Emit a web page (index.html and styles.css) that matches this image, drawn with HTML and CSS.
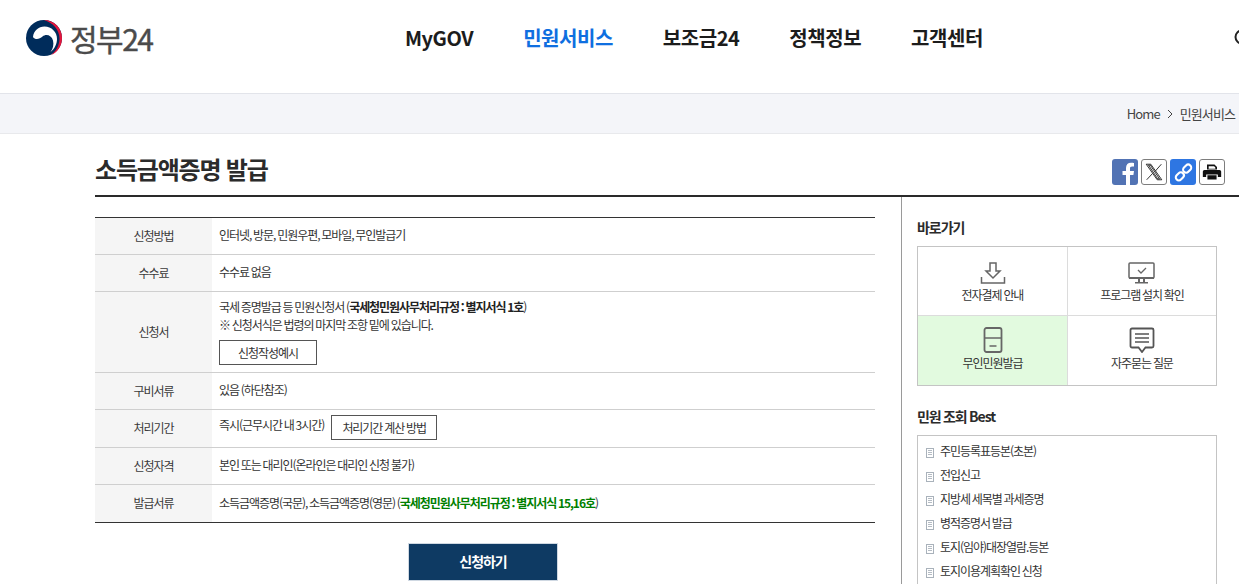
FILE: index.html
```html
<!DOCTYPE html>
<html lang="ko">
<head>
  <meta charset="UTF-8">
  <title>소득금액증명 발급 | 정부24</title>
  <link rel="stylesheet" href="styles.css">
</head>
<body>

<header class="top-header">
  <a class="logo">
    <svg class="logo-mark" viewBox="0 0 36 36" width="36" height="36">
      <circle cx="18" cy="18" r="18" fill="#002c5b"/>
      <path d="M18 0C28 0 36 8 36 18c0 8-4.500 14.500-11 17 5-3.500 8.500-10 8.500-16.500C33.500 9.500 26.500 2.500 18 0z" fill="#e3153c"/>
      <path d="M7 17C7.500 11 12.500 6.500 18.500 6.500 25.500 6.500 31 12 31 19c0 5-2.500 10-6.500 13 2.500-3 3.500-7.500 2.500-11.500C25.500 15 20 13.500 16.500 16.500 13.500 19.500 9 20 7 17z" fill="#fff"/>
    </svg>
    <span class="logo-text">정부24</span>
  </a>
  <nav class="main-nav">
    <a>MyGOV</a>
    <a class="active">민원서비스</a>
    <a>보조금24</a>
    <a>정책정보</a>
    <a>고객센터</a>
  </nav>
  <svg class="search-icon" viewBox="0 0 20 20" width="20" height="20">
    <circle cx="9" cy="9" r="6.500" fill="none" stroke="#222" stroke-width="2"/>
    <path d="M14 14l5 5" stroke="#222" stroke-width="2"/>
  </svg>
</header>

<div class="breadcrumb">
  <a>Home</a>
  <svg viewBox="0 0 6 10" width="6" height="10"><path d="M1 1l4 4-4 4" fill="none" stroke="#444" stroke-width="1"/></svg>
  <a>민원서비스</a>
</div>

<div class="content">
  <div class="title-row">
    <h1>소득금액증명 발급</h1>
    <div class="share">
      <a class="share-btn fb">
        <svg viewBox="0 0 26 26" width="26" height="26"><path d="M18 26V16h3.400l.6-4h-4V9.500c0-1.200.5-2 2.100-2H22V3.900C21.500 3.800 20.300 3.700 19 3.700c-3 0-5 1.800-5 5.200V12h-3.500v4H14v10z" fill="#fff"/></svg>
      </a>
      <a class="share-btn plain">
        <svg viewBox="0 0 24 24" width="22" height="22"><path d="M3.500 3.500h5L20.500 20.500h-5zM20 3.500 13 11.500M10.500 13.500 4 20.500M6 4.500h2L18 19.500h-2z" fill="none" stroke="#222" stroke-width="1"/></svg>
      </a>
      <a class="share-btn link">
        <svg viewBox="0 0 26 26" width="21" height="21"><g fill="none" stroke="#fff" stroke-width="2.600"><rect x="12" y="4.500" width="11" height="7.500" rx="3.700" transform="rotate(-45 17.500 8.200)"/><rect x="3" y="14" width="11" height="7.500" rx="3.700" transform="rotate(-45 8.500 17.800)"/></g></svg>
      </a>
      <a class="share-btn plain">
        <svg viewBox="0 0 24 24" width="20" height="20"><path d="M6 3h9l3 3v3H6zM8 5v3h8V6.500L14.500 5zM3 9.500h18a2 2 0 0 1 2 2V18h-4v-3H5v3H1v-6.500a2 2 0 0 1 2-2zM6.500 16h11v5h-11z" fill="#111" fill-rule="evenodd"/></svg>
      </a>
    </div>
  </div>

  <div class="columns">
    <main class="main-col">
      <table class="info-table">
        <tr class="h37">
          <th>신청방법</th>
          <td>인터넷, 방문, 민원우편, 모바일, 무인발급기</td>
        </tr>
        <tr class="h37">
          <th>수수료</th>
          <td>수수료 없음</td>
        </tr>
        <tr>
          <th>신청서</th>
          <td class="form-cell">
            <p>국세 증명발급 등 민원신청서 (<b>국세청민원사무처리규정 : 별지서식 1호</b>)</p>
            <p>※ 신청서식은 법령의 마지막 조항 밑에 있습니다.</p>
            <a class="line-btn wide">신청작성예시</a>
          </td>
        </tr>
        <tr class="h37">
          <th>구비서류</th>
          <td>있음 (하단참조)</td>
        </tr>
        <tr class="h38">
          <th>처리기간</th>
          <td class="period-cell"><span>즉시(근무시간 내 3시간)</span><a class="line-btn">처리기간 계산 방법</a></td>
        </tr>
        <tr class="h37">
          <th>신청자격</th>
          <td>본인 또는 대리인(온라인은 대리인 신청 불가)</td>
        </tr>
        <tr class="h38">
          <th>발급서류</th>
          <td>소득금액증명(국문), 소득금액증명(영문) (<b class="green">국세청민원사무처리규정 : 별지서식 15,16호</b>)</td>
        </tr>
      </table>
      <div class="apply-wrap">
        <a class="apply-btn">신청하기</a>
      </div>
    </main>

    <aside class="side-col">
      <h2>바로가기</h2>
      <div class="quick-grid">
        <a class="quick-item">
          <svg viewBox="0 0 26 24" width="26" height="24"><path d="M10 2h6v8h4l-7 7-7-7h4zM1.500 16v6h23v-6" fill="none" stroke="#666" stroke-width="1.500"/></svg>
          <span>전자결제 안내</span>
        </a>
        <a class="quick-item">
          <svg viewBox="0 0 28 24" width="28" height="24"><rect x="1" y="2" width="25" height="15" rx="1" fill="none" stroke="#666" stroke-width="1.500"/><path d="M1 16h25v2H1z" fill="#666"/><path d="M10 9l3 3 5-5" fill="none" stroke="#666" stroke-width="1.300"/><path d="M10 18h2v3h-2zM15 18h2v3h-2zM7 21h13v1.500H7z" fill="#666"/></svg>
          <span>프로그램 설치 확인</span>
        </a>
        <a class="quick-item kiosk">
          <svg viewBox="0 0 20 26" width="20" height="26"><rect x="1.500" y="1" width="17" height="24" rx="2" fill="none" stroke="#666" stroke-width="1.800"/><path d="M2 11h16" stroke="#666" stroke-width="1.500"/><path d="M6.500 19h7" stroke="#666" stroke-width="1.500"/></svg>
          <span>무인민원발급</span>
        </a>
        <a class="quick-item">
          <svg viewBox="0 0 26 26" width="26" height="26"><path d="M3 1.500h20a1.500 1.500 0 0 1 1.500 1.500v16a1.500 1.500 0 0 1-1.500 1.500h-6.500L13 25l-3.500-4.500H3A1.500 1.500 0 0 1 1.500 19V3A1.500 1.500 0 0 1 3 1.500z" fill="none" stroke="#555" stroke-width="1.800"/><path d="M6 7h14M6 11h14M6 15h14" stroke="#555" stroke-width="1.600"/></svg>
          <span>자주묻는 질문</span>
        </a>
      </div>

      <h2 class="best-title">민원 조회 Best</h2>
      <ul class="best-list">
        <li>주민등록표등본(초본)</li>
        <li>전입신고</li>
        <li>지방세 세목별 과세증명</li>
        <li>병적증명서 발급</li>
        <li>토지(임야)대장열람.등본</li>
        <li>토지이용계획확인 신청</li>
      </ul>
    </aside>
  </div>
</div>

</body>
</html>
```

FILE: styles.css
```css
* {
  margin: 0;
  padding: 0;
  box-sizing: border-box;
}
html, body {
  height: 584px;
  overflow: hidden;
}
body {
  width: 1239px;
  background: #fff;
  color: #333;
  font-family: "Noto Sans CJK KR", "Noto Sans", sans-serif;
  font-size: 12px;
  letter-spacing: -1.05px;
  word-spacing: -0.5px;
}
a {
  color: inherit;
  text-decoration: none;
}

.top-header {
  height: 94px;
  width: 1260px;
  display: flex;
  align-items: flex-start;
  padding: 20px 0 0 26px;
  border-bottom: 1px solid #e2e4ea;
}
.logo {
  display: flex;
  align-items: center;
  gap: 8px;
  width: 379px;
  height: 36px;
}
.logo-text {
  font-size: 30px;
  color: #4b4b4b;
  letter-spacing: -0.05em;
  -webkit-text-stroke: 0.4px #4b4b4b;
}
.main-nav {
  display: flex;
  gap: 50px;
  height: 34px;
  align-items: center;
}
.main-nav a {
  font-size: 20px;
  font-weight: 700;
  color: #1c1c1c;
  letter-spacing: -0.023em;
  word-spacing: 0;
}
.main-nav a.active {
  color: #0f6fe0;
}
.search-icon {
  margin: 8px 0 0 250px;
}

.breadcrumb {
  height: 40px;
  background: #f4f5f9;
  border-bottom: 1px solid #e8e9ec;
  display: flex;
  align-items: center;
  justify-content: flex-end;
  gap: 7px;
  padding-right: 4px;
  font-size: 13px;
  letter-spacing: -0.07em;
  color: #444;
}

.content {
  padding-left: 95px;
}
.title-row {
  height: 63px;
  display: flex;
  justify-content: space-between;
  border-bottom: 2px solid #2a2a2a;
  padding-right: 14px;
}
.title-row h1 {
  font-size: 24px;
  font-weight: 700;
  color: #2b2b2b;
  line-height: 35px;
  padding-top: 17px;
  letter-spacing: -0.05em;
  word-spacing: 0;
}
.share {
  display: flex;
  gap: 3px;
  padding-top: 25px;
}
.share-btn {
  width: 26px;
  height: 26px;
  border-radius: 3px;
  display: flex;
  align-items: center;
  justify-content: center;
  overflow: hidden;
}
.share-btn.fb {
  background: #5273b4;
}
.share-btn.link {
  background: #2e76e2;
}
.share-btn.plain {
  border: 1px solid #7d7d7d;
}

.columns {
  display: flex;
}
.main-col {
  width: 780px;
  padding-top: 20px;
}
.info-table {
  width: 780px;
  border-collapse: collapse;
  border-top: 1px solid #333;
  border-bottom: 1px solid #333;
  table-layout: fixed;
}
.info-table tr {
  border-bottom: 1px solid #cfcfcf;
}
.info-table tr.h37 {
  height: 37px;
}
.info-table tr.h38 {
  height: 38px;
}
.info-table tr:last-child {
  border-bottom: 1px solid #333;
}
.info-table th {
  width: 117px;
  background: #f5f5f5;
  font-weight: 400;
  color: #3a3a3a;
  padding-bottom: 2px;
}
.info-table td {
  padding: 0 7px 2px;
  line-height: 18px;
}
.info-table td.form-cell {
  padding-top: 6px;
  padding-bottom: 7px;
}
.info-table b {
  font-weight: 700;
  color: #222;
}
.info-table b.green {
  color: #008000;
}
.line-btn {
  display: inline-block;
  height: 25px;
  line-height: 23px;
  width: 106px;
  border: 1px solid #555;
  text-align: center;
}
.line-btn.wide {
  display: block;
  width: 98px;
  margin-top: 6px;
}
.period-cell span {
  margin-right: 7px;
  vertical-align: 3px;
}
.apply-wrap {
  display: flex;
  justify-content: center;
  padding: 20px 4px 0 0;
}
.apply-btn {
  width: 150px;
  height: 38px;
  background: #0e3a63;
  border: 1px solid #cfd8e2;
  color: #fff;
  font-size: 14px;
  font-weight: 700;
  line-height: 35px;
  text-align: center;
}

.side-col {
  margin-left: 26px;
  border-left: 1px solid #9a9a9a;
  padding: 19px 0 0 15px;
  height: 400px;
}
.side-col h2 {
  font-size: 14px;
  font-weight: 700;
  color: #2b2b2b;
  line-height: 22px;
}
.quick-grid {
  width: 300px;
  margin-top: 8px;
  display: grid;
  grid-template-columns: 150px 148px;
  grid-template-rows: 69px 69px;
  border: 1px solid #c4c4c4;
}
.quick-item {
  display: flex;
  flex-direction: column;
  align-items: center;
  justify-content: flex-end;
  gap: 1px;
  padding-bottom: 12px;
  color: #333;
}
.quick-item:nth-child(odd) {
  border-right: 1px solid #dcdcdc;
}
.quick-item:nth-child(-n+2) {
  border-bottom: 1px solid #dcdcdc;
}
.quick-item:nth-child(n+3) {
  padding-bottom: 14px;
}
.quick-item.kiosk {
  background: #e2fadf;
}
.best-title {
  margin-top: 19px;
}
.best-list {
  width: 300px;
  margin-top: 8px;
  height: 200px;
  border: 1px solid #c4c4c4;
  padding-top: 3px;
  list-style: none;
}
.best-list li {
  height: 24px;
  line-height: 24px;
  padding-left: 22px;
  position: relative;
}
.best-list li::before {
  content: "";
  box-sizing: border-box;
  position: absolute;
  left: 8px;
  top: 9px;
  width: 8px;
  height: 10px;
  padding: 1px;
  border: 1px solid #a9b2bb;
  background: repeating-linear-gradient(#b5bcc4 0, #b5bcc4 1px, #fff 1px, #fff 2px) content-box;
}
```
